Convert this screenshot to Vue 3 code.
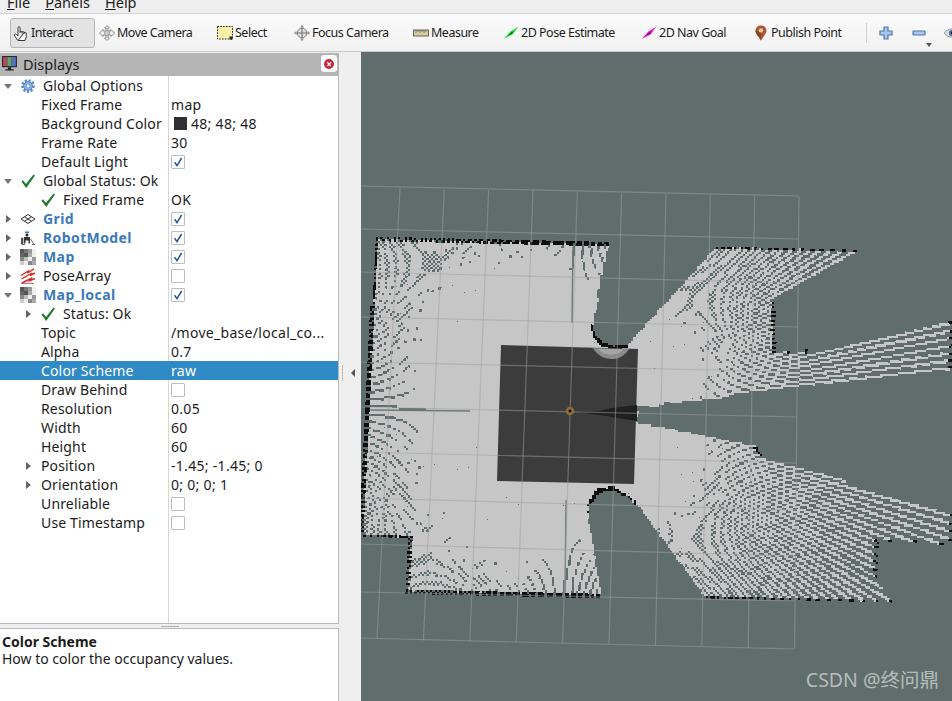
<script setup>
// tree rows of the Displays panel
const rows = [
  { d: 0, arrow: 'down', icon: 'gear', label: 'Global Options' },
  { d: 1, label: 'Fixed Frame', value: 'map' },
  { d: 1, label: 'Background Color', value: '48; 48; 48', swatch: true },
  { d: 1, label: 'Frame Rate', value: '30' },
  { d: 1, label: 'Default Light', check: 'on' },
  { d: 0, arrow: 'down', icon: 'ok', label: 'Global Status: Ok' },
  { d: 1, icon: 'ok', label: 'Fixed Frame', value: 'OK' },
  { d: 0, arrow: 'right', icon: 'grid', label: 'Grid', blue: true, check: 'on' },
  { d: 0, arrow: 'right', icon: 'robot', label: 'RobotModel', blue: true, check: 'on' },
  { d: 0, arrow: 'right', icon: 'map', label: 'Map', blue: true, check: 'on' },
  { d: 0, arrow: 'right', icon: 'pose', label: 'PoseArray', check: 'off' },
  { d: 0, arrow: 'down', icon: 'map', label: 'Map_local', blue: true, check: 'on' },
  { d: 1, arrow: 'right', icon: 'ok', label: 'Status: Ok' },
  { d: 1, label: 'Topic', value: '/move_base/local_co...' },
  { d: 1, label: 'Alpha', value: '0.7' },
  { d: 1, label: 'Color Scheme', value: 'raw', selected: true },
  { d: 1, label: 'Draw Behind', check: 'off' },
  { d: 1, label: 'Resolution', value: '0.05' },
  { d: 1, label: 'Width', value: '60' },
  { d: 1, label: 'Height', value: '60' },
  { d: 1, arrow: 'right', label: 'Position', value: '-1.45; -1.45; 0' },
  { d: 1, arrow: 'right', label: 'Orientation', value: '0; 0; 0; 1' },
  { d: 1, label: 'Unreliable', check: 'off' },
  { d: 1, label: 'Use Timestamp', check: 'off' }
]

const tools = [
  { name: 'Interact', icon: 'hand', w: 85, active: true },
  { name: 'Move Camera', icon: 'move', w: 118 },
  { name: 'Select', icon: 'select', w: 77 },
  { name: 'Focus Camera', icon: 'focus', w: 119 },
  { name: 'Measure', icon: 'measure', w: 90 },
  { name: '2D Pose Estimate', icon: 'poseGoal', w: 138 },
  { name: '2D Nav Goal', icon: 'navGoal', w: 112 },
  { name: 'Publish Point', icon: 'pin', w: 113 }
]

const arrowShape = (c, d) =>
  `<path d="M.5 14 L7.4 6.6 L15.5 1.5 L9.6 9.4 Z" fill="${c}"/>` +
  `<path d="M4 11 L8 7.6 L11 6 L9 9 Z" fill="${d}"/>`

const mapCells = [
  '#555', '#777', '#999', '#eee', '#666', '#555', '#aaa', '#eee', '#888', '#bbb', '#eee', '#999', '#ccc', '#eee', '#888', '#aaa'
]

const icons = {
  hand: '<path d="M4.5 15 L1.4 10.4 C.8 9.3 2.3 8.4 3.3 9.4 L5 11 V2.6 C5 1.4 7 1.4 7 2.6 V8 M7 7 C7 5.9 9 5.9 9 7 V8.5 M9 7.4 C9 6.4 11 6.4 11 7.4 V9 M11 8 C11 7 13.2 7 13.2 8 V12 L12 15.5 H5 Z" fill="#fff" stroke="#222" stroke-width=".9"/>',
  move: '<path d="M8 .5 L10.5 3 H9 V6 H12 V4.5 L15.5 8 L12 11.5 V10 H9 V13 H10.5 L8 15.5 L5.5 13 H7 V10 H4 V11.5 L.5 8 L4 4.5 V6 H7 V3 H5.5 Z" fill="#eee" stroke="#777" stroke-width=".8"/><circle cx="8" cy="8" r="2.6" fill="#ccc" stroke="#888" stroke-width=".7"/>',
  select: '<rect x=".5" y="1.5" width="15" height="12.5" fill="#f8f0a8" stroke="#222" stroke-dasharray="1.6 1.2"/><rect x="12.5" y="11.5" width="3" height="3" fill="#222"/>',
  focus: '<circle cx="8" cy="8" r="4.8" fill="#ddd" stroke="#888" stroke-width="1"/><path d="M8 .5 V15.5 M.5 8 H15.5" stroke="#777" stroke-width="1.1"/><path d="M8 0 L10 2.4 H6 Z M8 16 L10 13.6 H6 Z M0 8 L2.4 6 V10 Z M16 8 L13.6 6 V10 Z" fill="#999"/>',
  measure: '<rect x=".5" y="5" width="15" height="6" fill="#d8cf9c" stroke="#555" stroke-width=".9"/><path d="M3 5 V8 M5 5 V7 M7 5 V8 M9 5 V7 M11 5 V8 M13 5 V7" stroke="#555" stroke-width=".7"/>',
  poseGoal: arrowShape('#22e03a', '#0b7d22'),
  navGoal: arrowShape('#e81fd0', '#8c1186'),
  pin: '<path d="M8 15.8 C6.5 12 2.5 9.5 2.5 5.6 C2.5 2.4 5 .4 8 .4 C11 .4 13.5 2.4 13.5 5.6 C13.5 9.5 9.5 12 8 15.8 Z" fill="#b0562d"/><path d="M8 15.8 C6.5 12 2.5 9.5 2.5 5.6 L8 7 Z" fill="#8a4322"/><circle cx="8" cy="5.4" r="2.2" fill="#e8c9b2"/>',
  plus: '<path d="M6 2 H10 V6 H14 V10 H10 V14 H6 V10 H2 V6 H6 Z" fill="#a9c5e8" stroke="#4a78b4" stroke-width="1.2"/>',
  minus: '<rect x="2" y="6" width="12" height="4" rx=".5" fill="#a9c5e8" stroke="#4a78b4" stroke-width="1.2"/>',
  eye: '<path d="M0 8 C4 2.5 12 2.5 16 8 C12 13.5 4 13.5 0 8 Z" fill="#d8dde4" stroke="#9aa3ad"/><circle cx="8" cy="8" r="3.2" fill="#5c7ea8"/><circle cx="8" cy="8" r="1.4" fill="#223"/>',
  gear: '<circle cx="8" cy="8" r="5.6" fill="none" stroke="#5b8dcf" stroke-width="2.6" stroke-dasharray="2.2 1.55"/><circle cx="8" cy="8" r="4.4" fill="#8fb4e4" stroke="#4f82c6" stroke-width="1"/><circle cx="8" cy="8" r="2" fill="#fff" stroke="#4f82c6" stroke-width=".8"/>',
  ok: '<path d="M1.5 8.5 L3 7.3 L6 11 L13.5 1.5 L15 2.5 L6.2 15 Z" fill="#1c7a2c"/>',
  grid: '<path d="M8 3.5 L15 8 L8 12.5 L1 8 Z M4.5 5.8 L11.5 10.2 M11.5 5.8 L4.5 10.2" fill="none" stroke="#333" stroke-width="1"/>',
  robot: '<path d="M5 1.5 h4 v1.6 h-4 Z" fill="#3c6fb0"/><circle cx="7" cy="5" r="1.5" fill="#222"/><path d="M4 7 h6 v6.5 h-1.5 v-3 h-3 v3 H4 Z" fill="#333"/><path d="M1.5 8 h1.4 v6 H1.5 Z M2 14.6 h3 M10.5 9 L14 14.5 M12 14.5 h3" fill="#444" stroke="#444" stroke-width=".8"/>',
  map: mapCells.map((c, i) => `<rect x="${(i % 4) * 4}" y="${Math.floor(i / 4) * 4}" width="4" height="4" fill="${c}"/>`).join(''),
  pose: '<path d="M1 7.5 L9 2.5 L7.5 5 L14 .8 M1.5 11 L12 5 L10 7.5 L15 5 M2 15 L12 10 L10 12.5 L15 10.5" fill="none" stroke="#d92b2b" stroke-width="1.4"/><path d="M1 15.3 H14" stroke="#992020" stroke-width=".7"/>',
  monitor: '<rect x="1" y="1" width="14" height="10.5" fill="#222"/><rect x="2" y="2" width="4" height="8.5" fill="#b5485c"/><rect x="6" y="2" width="4" height="8.5" fill="#5fa86a"/><rect x="10" y="2" width="4" height="8.5" fill="#5a6fc0"/><path d="M6.5 11.5 h3 v2 h-3 Z M4 13.5 h8 v1.2 h-8 Z" fill="#222"/>'
}

// occupancy map: outline in page pixels, third value = the segment starting there is a wall
const outline = [
  [378, 239, 1], [608, 245, 0], [592, 327, 1], [594, 336, 1], [601, 344, 1], [612, 349, 1], [627, 347, 0],
  [660, 303, 0], [708, 248, 1], [867, 251, 0], [772, 302, 1], [773, 352, 1], [812, 352, 0], [950, 322, 1],
  [950, 370, 0], [637, 407, 0], [636, 423, 0], [754, 445, 1], [762, 459, 0], [950, 509, 1], [950, 545, 1],
  [881, 539, 1], [875, 542, 1], [875, 583, 0], [900, 601, 1], [700, 596, 0], [636, 503, 1], [624, 494, 1],
  [612, 488, 1], [598, 490, 1], [588, 505, 1], [588, 513, 0], [602, 595, 1], [405, 591, 1], [409, 583, 1],
  [411, 537, 1], [362, 535, 1], [367, 420, 1]
]
const robot = [570, 411]
// the scan is finer towards the left walls, which are closer
const STEP_LEFT = (Math.PI * 2) / 390
const STEP_RIGHT = (Math.PI * 2) / 330
const o = [378, 239]
const U = [2.24, 0.05]
const V = [-0.11, 2.24]
const det = U[0] * V[1] - U[1] * V[0]
const W = 320
const H = 220
const OFF_I = -20
const OFF_J = -20
const cells = new Uint8Array(W * H)

const cellAt = (x, y) => {
  const dx = x - o[0]
  const dy = y - o[1]
  return [Math.floor((dx * V[1] - dy * V[0]) / det) - OFF_I, Math.floor((dy * U[0] - dx * U[1]) / det) - OFF_J]
}
const mark = (x, y, val) => {
  const [i, j] = cellAt(x, y)
  if (i >= 0 && j >= 0 && i < W && j < H && cells[j * W + i] < val) cells[j * W + i] = val
}

for (let a = 0.002; a < Math.PI * 2; a += Math.cos(a) < 0 ? STEP_LEFT : STEP_RIGHT) {
  const cx = Math.cos(a)
  const cy = Math.sin(a)
  let best = Infinity
  let wall = 0
  outline.forEach((p, n) => {
    const q = outline[(n + 1) % outline.length]
    const ex = q[0] - p[0]
    const ey = q[1] - p[1]
    const den = cx * ey - cy * ex
    if (Math.abs(den) < 1e-9) return
    const t = ((p[0] - robot[0]) * ey - (p[1] - robot[1]) * ex) / den
    const s = ((p[0] - robot[0]) * cy - (p[1] - robot[1]) * cx) / den
    if (t > 0 && s >= 0 && s <= 1 && t < best) {
      best = t
      wall = p[2]
    }
  })
  for (let s = 0; s < best; s += 0.8) mark(robot[0] + cx * s, robot[1] + cy * s, 1)
  if (wall) {
    mark(robot[0] + cx * best, robot[1] + cy * best, 2)
    mark(robot[0] + cx * (best + 1.6), robot[1] + cy * (best + 1.6), 2)
  }
}

const quad = (i0, i1, j) => {
  const pt = (i, j2) => {
    const a = i + OFF_I
    const b = j2 + OFF_J
    return `${(o[0] + a * U[0] + b * V[0]).toFixed(2)} ${(o[1] + a * U[1] + b * V[1]).toFixed(2)}`
  }
  return `M${pt(i0, j)}L${pt(i1, j)}L${pt(i1, j + 1)}L${pt(i0, j + 1)}Z`
}
let freePath = ''
let wallPath = ''
for (let j = 0; j < H; j++) {
  let i = 0
  while (i < W) {
    const val = cells[j * W + i]
    let e = i + 1
    while (e < W && cells[j * W + e] === val) e++
    if (val === 1) freePath += quad(i, e, j)
    if (val === 2) wallPath += quad(i, e, j)
    i = e
  }
}

// 1 m grid, interpolated between the far and near edges
const gridLines = []
for (let n = -1; n <= 9; n++) {
  gridLines.push({ x1: 400 + n * 44.33, y1: 187 + (n + 1) * 1.0, x2: 377 + n * 46.4, y2: 638 + (n + 1) * 1.1 })
}
const leftY = [186, 229, 272, 317, 362, 407, 452, 498, 544, 592, 638]
const rightY = [196, 239, 283, 327, 372, 417, 463, 510, 556, 601, 649]
leftY.forEach((y, n) => {
  gridLines.push({ x1: 361, y1: y, x2: 799 - n * 0.5, y2: rightY[n] })
})
</script>

<template>
  <div class="window">
    <div class="menubar">
      <span><u>F</u>ile</span>
      <span><u>P</u>anels</span>
      <span><u>H</u>elp</span>
    </div>

    <div class="toolbar">
      <i class="grip"></i>
      <div
        v-for="t in tools"
        :key="t.name"
        class="tool"
        :class="{ active: t.active }"
        :style="{ width: t.w + 'px' }"
      >
        <svg class="tool-icon" viewBox="0 0 16 16" v-html="icons[t.icon]"></svg>
        <span>{{ t.name }}</span>
      </div>
      <i class="sep"></i>
      <svg class="tool-icon plus" viewBox="0 0 16 16" v-html="icons.plus"></svg>
      <svg class="tool-icon minus" viewBox="0 0 16 16" v-html="icons.minus"></svg>
      <i class="drop"></i>
      <svg class="tool-icon eye" viewBox="0 0 16 16" v-html="icons.eye"></svg>
    </div>

    <div class="main">
      <div class="side">
        <div class="title">
          <svg class="title-icon" viewBox="0 0 16 16" v-html="icons.monitor"></svg>
          <span>Displays</span>
          <div class="close"><b>×</b></div>
        </div>
        <div class="tree">
          <div v-for="(r, n) in rows" :key="n" class="row" :class="{ selected: r.selected }">
            <div class="name" :class="'depth' + r.d">
              <i class="arrow" :class="r.arrow"></i>
              <svg v-if="r.icon" class="row-icon" viewBox="0 0 16 16" v-html="icons[r.icon]"></svg>
              <span class="label" :class="{ blue: r.blue }">{{ r.label }}</span>
            </div>
            <div class="val">
              <i v-if="r.swatch" class="swatch"></i>
              <span v-if="r.value">{{ r.value }}</span>
              <i v-if="r.check" class="box">
                <svg v-if="r.check === 'on'" viewBox="0 0 12 12"><path d="M2.6 6.2 L5 9.6 L9.6 2" fill="none" stroke="#23598f" stroke-width="1.5"/></svg>
              </i>
            </div>
          </div>
          <div class="row filler">
            <div class="name"></div>
            <div class="val"></div>
          </div>
        </div>
        <div class="splitter"><i></i></div>
        <div class="info">
          <strong>Color Scheme</strong>
          <p>How to color the occupancy values.</p>
        </div>
      </div>

      <div class="gutter">
        <i class="dots"></i>
        <i class="collapse"></i>
      </div>

      <div class="view">
        <svg class="scene" viewBox="361 52 591 649">
          <path :d="freePath" fill="#c6c6c6" shape-rendering="crispEdges" />
          <path d="M573 247 L572 323 M370 410 L470 411 M566 500 L565 593" stroke="#6d7b79" stroke-width="1.4" />
          <path :d="wallPath" fill="#0d0d0d" shape-rendering="crispEdges" />
          <path d="M501 345 L638 349 L634 484 L497 481 Z" fill="#3c3c3c" />
          <path d="M593 348 C600 361 620 364 629 349 Z" fill="#8a8a8a" />
          <path d="M598 349 C604 356 618 357 624 349 Z" fill="#a4a4a4" />
          <path d="M576 412 L600 411 L612 408 L637 405 L637 421 L612 417 L600 415 Z" fill="#202020" />
          <line
            v-for="(l, n) in gridLines"
            :key="n"
            :x1="l.x1"
            :y1="l.y1"
            :x2="l.x2"
            :y2="l.y2"
            stroke="rgb(160,160,164)"
            stroke-opacity="0.5"
            stroke-width="1.2"
          />
          <circle cx="570" cy="411" r="4.3" fill="#8c6c3a" />
          <circle cx="570" cy="411" r="1.4" fill="#111" />
        </svg>
        <div class="mark">CSDN @终问鼎</div>
      </div>
    </div>
  </div>
</template>

<style scoped>
.window {
  width: 952px;
  height: 701px;
  overflow: hidden;
  display: flex;
  flex-direction: column;
  background: #efefef;
  color: #1c1c1c;
  font-family: "Noto Sans", "Noto Sans CJK SC", sans-serif;
}

.menubar {
  height: 13px;
  display: flex;
  gap: 15px;
  padding-left: 7px;
  overflow: hidden;
  border-bottom: 1px solid #d4d4d4;
  line-height: 13px;
  font-size: 14.5px;
}

.menubar span {
  margin-top: -4px;
}

.toolbar {
  height: 37px;
  display: flex;
  align-items: center;
  background: linear-gradient(#fafafa, #f2f2f2);
  border-bottom: 1px solid #c9c9c9;
  position: relative;
  font-size: 12.5px;
  letter-spacing: -0.5px;
}

.grip {
  width: 10px;
  flex-shrink: 0;
}

.tool {
  height: 30px;
  box-sizing: border-box;
  display: flex;
  align-items: center;
  gap: 2px;
  padding-left: 2px;
  flex-shrink: 0;
  white-space: nowrap;
}

.tool.active {
  margin-right: 2px;
  background: #e3e3e3;
  border: 1px solid #b5b5b5;
  border-radius: 3px;
}

.tool-icon {
  width: 16px;
  height: 16px;
  flex-shrink: 0;
}

.sep {
  width: 1px;
  height: 20px;
  flex-shrink: 0;
  background: #d0d0d0;
  margin-left: 2px;
}

.plus {
  margin-left: 11px;
}

.minus {
  margin-left: 17px;
}

.drop {
  position: absolute;
  left: 926px;
  top: 29px;
  border: 3px solid transparent;
  border-top: 4px solid #555;
}

.eye {
  margin-left: 17px;
}

.main {
  flex: 1;
  min-height: 0;
  display: flex;
}

.side {
  width: 339px;
  flex-shrink: 0;
  display: flex;
  flex-direction: column;
  padding-top: 1px;
  box-sizing: border-box;
}

.title {
  height: 23px;
  flex-shrink: 0;
  display: flex;
  align-items: center;
  background: #b5b5b5;
  padding: 0 0 2px 1px;
  box-sizing: border-box;
  font-size: 14.5px;
  position: relative;
}

.title-icon {
  width: 17px;
  height: 17px;
  margin-right: 5px;
}

.close {
  position: absolute;
  right: 2px;
  top: 2px;
  width: 16px;
  height: 17px;
  background: #fff;
  border-radius: 3px;
  display: flex;
  align-items: center;
  justify-content: center;
}

.close b {
  width: 10px;
  height: 10px;
  border-radius: 50%;
  background: #c8243c;
  color: #fff;
  font-size: 10px;
  line-height: 10px;
  text-align: center;
}

.tree {
  flex: 1;
  min-height: 0;
  display: flex;
  flex-direction: column;
  background: #fff;
  border-right: 1px solid #b9b9b9;
  border-bottom: 1px solid #b9b9b9;
}

.row {
  height: 19px;
  flex-shrink: 0;
  display: flex;
  align-items: center;
  font-size: 14px;
  line-height: 19px;
}

.row.filler {
  flex: 1;
  align-items: stretch;
}

.row.selected {
  background: #2f8ac6;
  color: #fff;
}

.name {
  width: 168px;
  flex-shrink: 0;
  display: flex;
  align-items: center;
  white-space: nowrap;
  overflow: hidden;
  letter-spacing: 0.15px;
}

.depth1 {
  padding-left: 20px;
  box-sizing: border-box;
}

.arrow {
  width: 16px;
  height: 16px;
  flex-shrink: 0;
  margin-right: 4px;
  position: relative;
}

.arrow.down::after,
.arrow.right::after {
  content: "";
  position: absolute;
  border: 4px solid transparent;
}

.arrow.down::after {
  left: 4px;
  top: 6px;
  border-top: 5px solid #777;
}

.arrow.right::after {
  left: 6px;
  top: 4px;
  border-left: 5px solid #666;
}

.row-icon {
  width: 16px;
  height: 16px;
  flex-shrink: 0;
  margin-right: 6px;
}

.label {
  padding-left: 1px;
}

.label.blue {
  color: #3a79bd;
  font-weight: 700;
  letter-spacing: 0.4px;
}

.val {
  flex: 1;
  height: 100%;
  box-sizing: border-box;
  border-left: 1px solid #d6d6d6;
  padding-left: 2px;
  display: flex;
  align-items: center;
  white-space: nowrap;
  overflow: hidden;
  letter-spacing: 0.3px;
}

.selected .val {
  border-left-color: #2f8ac6;
}

.swatch {
  width: 13px;
  height: 13px;
  flex-shrink: 0;
  margin: 0 4px 0 3px;
  background: #303030;
}

.box {
  width: 14px;
  height: 14px;
  box-sizing: border-box;
  border: 1px solid #bdbdbd;
  border-radius: 1px;
  background: #fff;
  display: block;
}

.box svg {
  display: block;
  width: 12px;
  height: 12px;
}

.splitter {
  height: 4px;
  flex-shrink: 0;
  display: flex;
  justify-content: center;
  align-items: center;
}

.splitter i {
  width: 18px;
  height: 1px;
  background-image: radial-gradient(#999 45%, transparent 50%);
  background-size: 3px 1px;
}

.info {
  height: 73px;
  flex-shrink: 0;
  box-sizing: border-box;
  background: #fff;
  border-top: 1px solid #b9b9b9;
  border-right: 1px solid #b9b9b9;
  padding: 4px 2px 0;
  line-height: 17px;
  font-size: 14px;
}

.info strong {
  display: block;
}

.info p {
  margin: 0;
}

.gutter {
  width: 22px;
  flex-shrink: 0;
  display: flex;
  align-items: center;
  padding-left: 3px;
  box-sizing: border-box;
  gap: 8px;
  padding-bottom: 8px;
}

.dots {
  width: 1px;
  height: 16px;
  background-image: radial-gradient(#aaa 45%, transparent 50%);
  background-size: 1px 3px;
}

.collapse {
  border: 4px solid transparent;
  border-left: 0;
  border-right: 4px solid #555;
}

.view {
  flex: 1;
  background: #5f6e6c;
  position: relative;
  overflow: hidden;
}

.scene {
  display: block;
  width: 591px;
  height: 649px;
}

.mark {
  position: absolute;
  right: 13px;
  bottom: 8px;
  color: rgba(255, 255, 255, 0.55);
  font-size: 19.5px;
  line-height: 26px;
}
</style>
